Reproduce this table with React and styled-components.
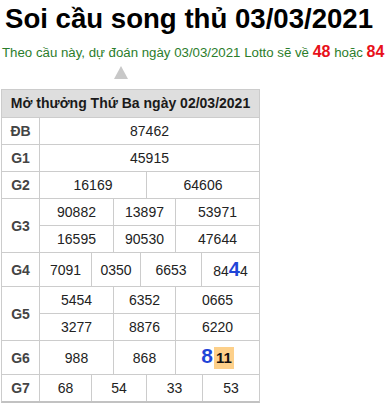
import React from "react";
import styled, { createGlobalStyle } from "styled-components";

const GlobalStyle = createGlobalStyle`
  body {
    margin: 0;
    background: #fff;
    font-family: "Liberation Sans", Arial, sans-serif;
  }
`;

const THREE = "73px 61px 1fr";
const FOUR_A = "51px 48px 60px 1fr";
const FOUR_B = "51px 54px 55px 1fr";

const Big = styled.span`
  color: #1f45d8;
  font-weight: bold;
  font-size: ${(p) => p.size || 20}px;
  line-height: 16px;
`;

const Hot = styled.span`
  display: inline-block;
  margin-left: 1px;
  padding: 0 2px;
  line-height: 22px;
  background: #fdd08a;
  color: #111;
  font-weight: bold;
  font-size: 15px;
`;

const prizes = [
  { label: "ĐB", lines: [{ cols: "1fr", cells: ["87462"] }] },
  { label: "G1", lines: [{ cols: "1fr", cells: ["45915"] }] },
  { label: "G2", lines: [{ cols: "106px 1fr", cells: ["16169", "64606"] }] },
  {
    label: "G3",
    lines: [
      { cols: THREE, cells: ["90882", "13897", "53971"] },
      { cols: THREE, cells: ["16595", "90530", "47644"] },
    ],
  },
  {
    label: "G4",
    lines: [
      {
        cols: FOUR_A,
        h: 33,
        cells: [
          "7091",
          "0350",
          "6653",
          <>
            84<Big>4</Big>4
          </>,
        ],
      },
    ],
  },
  {
    label: "G5",
    lines: [
      { cols: THREE, cells: ["5454", "6352", "0665"] },
      { cols: THREE, cells: ["3277", "8876", "6220"] },
    ],
  },
  {
    label: "G6",
    lines: [
      {
        cols: THREE,
        h: 33,
        cells: [
          "988",
          "868",
          <>
            <Big size={21}>8</Big>
            <Hot>11</Hot>
          </>,
        ],
      },
    ],
  },
  { label: "G7", lines: [{ cols: FOUR_B, cells: ["68", "54", "33", "53"] }] },
];

const App = () => {
  return (
    <Page>
      <GlobalStyle />
      <Title>Soi cầu song thủ 03/03/2021</Title>
      <Forecast>
        Theo cầu này, dự đoán ngày 03/03/2021 Lotto sẽ về <Pick>48</Pick> hoặc{" "}
        <Pick>84</Pick>
      </Forecast>
      <Arrow />
      <Table>
        <Head>Mở thưởng Thứ Ba ngày 02/03/2021</Head>
        {prizes.map((prize) => (
          <Group key={prize.label}>
            <Label>{prize.label}</Label>
            <Lines>
              {prize.lines.map((line, i) => (
                <Line key={i} cols={line.cols}>
                  {line.cells.map((cell, j) => (
                    <Cell key={j} h={line.h}>
                      <span>{cell}</span>
                    </Cell>
                  ))}
                </Line>
              ))}
            </Lines>
          </Group>
        ))}
      </Table>
    </Page>
  );
};

export default App;

const Page = styled.div`
  width: 386px;
  height: 404px;
  overflow: hidden;
`;

const Title = styled.h1`
  margin: 3px 0 0 5px;
  font-size: 27.6px;
  font-weight: bold;
  color: #000;
`;

const Forecast = styled.div`
  margin: 8px 0 0 2px;
  font-size: 13.25px;
  color: #2b7d2b;
  white-space: nowrap;
`;

const Pick = styled.b`
  color: #e8111a;
  font-size: 16px;
`;

const Arrow = styled.div`
  width: 0;
  height: 0;
  margin: 5px 0 0 114px;
  border-left: 7px solid transparent;
  border-right: 7px solid transparent;
  border-bottom: 13px solid #c8c8c8;
`;

const Table = styled.div`
  width: 257px;
  margin: 10px 0 0 1px;
  display: grid;
  gap: 1px;
  background: #cccccc;
  border: 1px solid #cccccc;
  border-bottom: 2px solid #c2c2c2;
  color: #222;
  font-size: 14px;
`;

const Head = styled.div`
  height: 27px;
  line-height: 27px;
  background: #dedede;
  text-align: center;
  font-weight: bold;
  color: #1a1a1a;
`;

const Group = styled.div`
  display: grid;
  grid-template-columns: 37px 1fr;
  gap: 1px;
`;

const Label = styled.div`
  display: flex;
  align-items: center;
  justify-content: center;
  background: #fff;
  font-weight: bold;
  color: #444;
`;

const Lines = styled.div`
  display: grid;
  gap: 1px;
`;

const Line = styled.div`
  display: grid;
  grid-template-columns: ${(p) => p.cols};
  gap: 1px;
`;

const Cell = styled.div`
  display: flex;
  align-items: center;
  justify-content: center;
  height: ${(p) => p.h || 26}px;
  line-height: 16px;
  background: #fff;
  white-space: nowrap;
`;
